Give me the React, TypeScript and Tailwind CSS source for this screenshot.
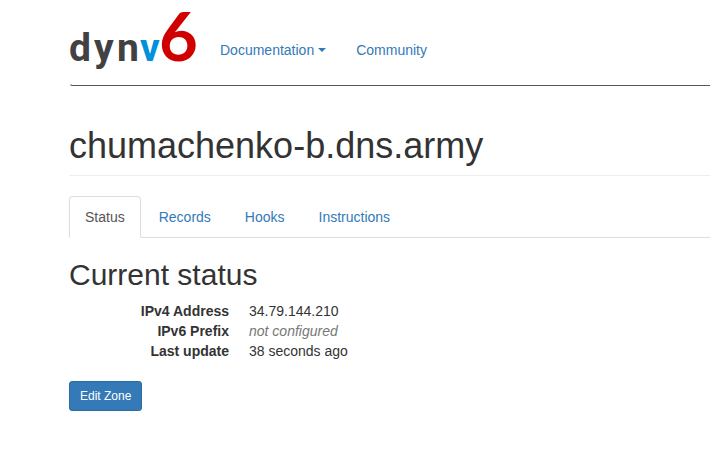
const tabs = ["Status", "Records", "Hooks", "Instructions"];

const details = [
  { term: "IPv4 Address", value: "34.79.144.210", muted: false },
  { term: "IPv6 Prefix", value: "not configured", muted: true },
  { term: "Last update", value: "38 seconds ago", muted: false },
];

function Logo() {
  return (
    <svg className="overflow-visible" width="136" height="70" viewBox="0 0 136 70" role="img" aria-label="dynv6">
      <g fontFamily="Roboto, 'Open Sans', sans-serif" fontWeight="700" fontSize="39">
        <text x="0 25 48" y="60" fill="#414042">dyn</text>
        <text x="71" y="60" fill="#0090dc">v</text>
      </g>
      <text x="90" y="60" fill="#d00000" fontFamily="Lato, sans-serif" fontWeight="700" fontSize="67">
        6
      </text>
    </svg>
  );
}

function Navbar() {
  return (
    <nav className="flex items-start rounded-l border border-r-0 border-transparent border-b-[#555] pb-[14px]">
      <a href="#home" className="-ml-px block">
        <Logo />
      </a>
      <ul className="flex pt-[39px]">
        <li>
          <a href="#documentation" className="flex items-center gap-1 px-[15px] text-[#337ab7]">
            Documentation
            <span className="border-x-4 border-t-4 border-x-transparent border-t-[#337ab7]" />
          </a>
        </li>
        <li>
          <a href="#community" className="block px-[15px] text-[#337ab7]">
            Community
          </a>
        </li>
      </ul>
    </nav>
  );
}

export default function App() {
  return (
    <div className="min-h-screen bg-white pl-[69px] font-['Liberation_Sans',Arial,sans-serif] text-[14px] leading-[20px] text-[#333]">
      <Navbar />
      <main>
        <header className="mt-10 mb-5 border-b border-[#eee] pb-[9px]">
          <h1 className="text-[36px] leading-[40px]">chumachenko-b.dns.army</h1>
        </header>
        <ul className="flex gap-[2px] border-b border-[#ddd]">
          {tabs.map((tab, i) => (
            <li key={tab} className="-mb-px">
              <a
                href={"#" + tab.toLowerCase()}
                className={
                  i === 0
                    ? "block rounded-t border border-[#ddd] border-b-white bg-white px-[15px] py-[10px] text-[#555]"
                    : "block rounded-t border border-transparent px-[15px] py-[10px] text-[#337ab7]"
                }
              >
                {tab}
              </a>
            </li>
          ))}
        </ul>
        <h2 className="mt-5 mb-[10px] text-[30px] leading-[33px]">Current status</h2>
        <dl className="mb-5">
          {details.map((d) => (
            <div key={d.term} className="flex gap-5">
              <dt className="w-40 text-right font-bold">{d.term}</dt>
              <dd className={d.muted ? "text-[#777] italic" : ""}>{d.value}</dd>
            </div>
          ))}
        </dl>
        <button
          type="button"
          className="block rounded-[3px] border border-[#2e6da4] bg-[#337ab7] px-[10px] py-[5px] text-[12px] leading-[18px] text-white"
        >
          Edit Zone
        </button>
      </main>
    </div>
  );
}
